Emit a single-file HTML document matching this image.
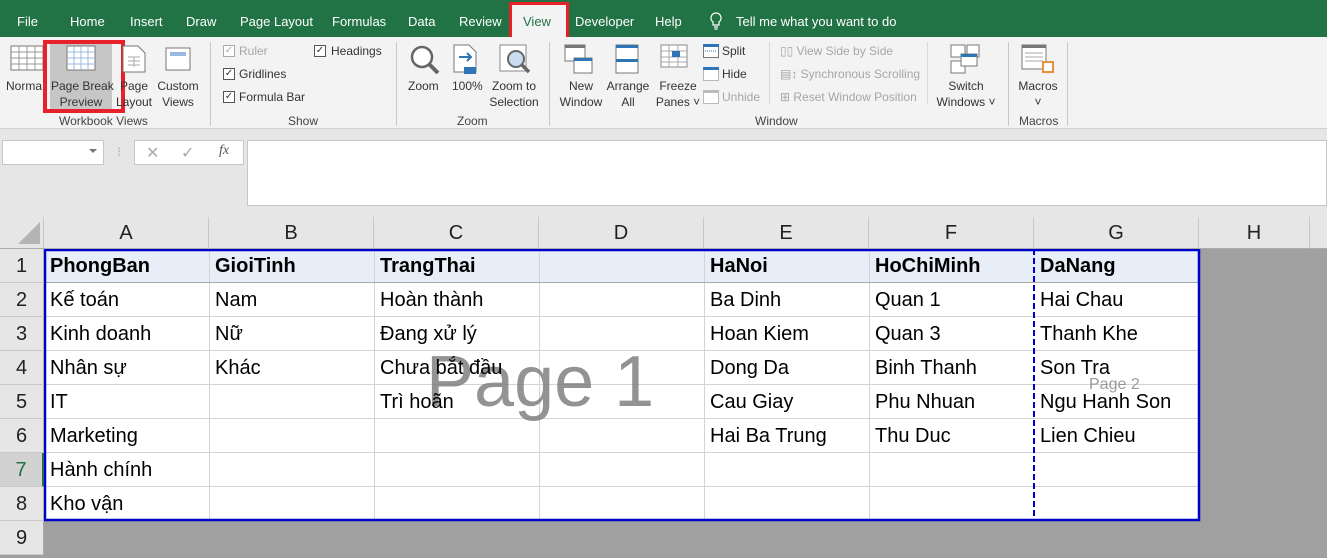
<!DOCTYPE html>
<html><head><meta charset="utf-8"><style>
*{margin:0;padding:0;box-sizing:border-box}
body{width:1327px;height:558px;overflow:hidden;background:#e6e6e6;font-family:"Liberation Sans",sans-serif;position:relative}
.a{position:absolute;white-space:nowrap}
.tab{position:absolute;top:14px;color:#fff;font-size:13px}
.rl{position:absolute;font-size:12px;color:#333;text-align:center;line-height:16px;white-space:nowrap}
.gl{position:absolute;top:114px;font-size:12px;color:#444;white-space:nowrap}
.sep{position:absolute;top:42px;width:1px;height:84px;background:#c8c8c8}
.cb{position:absolute;width:12px;height:12px;border:1px solid #555;background:#fff;font-size:10px;line-height:10px;text-align:center;color:#333}
.dis{color:#a6a6a6}
.ch{position:absolute;top:217px;height:32px;background:#e6e6e6;border-right:1px solid #c8c8c8;border-bottom:1px solid #ababab;font-size:20px;text-align:center;line-height:33px;color:#222}
.rh{position:absolute;left:0;width:44px;height:34px;background:#e6e6e6;border-bottom:1px solid #c8c8c8;border-right:1px solid #ababab;font-size:20px;text-align:center;line-height:34px;color:#222}
.c{position:absolute;font-size:20px;color:#000;line-height:34px;white-space:nowrap}
.b{font-weight:bold}
</style></head><body>
<div class="a" style="left:0;top:0;width:1327px;height:37px;background:#217346"></div>
<div class="tab" style="left:17px">File</div>
<div class="tab" style="left:70px">Home</div>
<div class="tab" style="left:130px">Insert</div>
<div class="tab" style="left:186px">Draw</div>
<div class="tab" style="left:240px">Page Layout</div>
<div class="tab" style="left:332px">Formulas</div>
<div class="tab" style="left:408px">Data</div>
<div class="tab" style="left:459px">Review</div>
<div class="a" style="left:509px;top:2px;width:60px;height:38px;background:#f3f3f3;border:3px solid #e8202a"></div>
<div class="tab" style="left:523px;color:#217346">View</div>
<div class="tab" style="left:575px">Developer</div>
<div class="tab" style="left:655px">Help</div>
<svg class="a" style="left:709px;top:12px" width="14" height="18" viewBox="0 0 14 18"><path d="M7 1a5 5 0 0 0-3 9v3h6v-3a5 5 0 0 0-3-9zM5 15h4M5.5 17h3" fill="none" stroke="#fff" stroke-width="1.2"/></svg>
<div class="tab" style="left:736px">Tell me what you want to do</div>
<div class="a" style="left:0;top:37px;width:1327px;height:92px;background:#f3f3f3;border-bottom:1px solid #d0d0d0"></div>
<svg class="a" style="left:10px;top:45px" width="34" height="26"><rect x="1" y="1" width="32" height="24" fill="#fff" stroke="#777"/><path d="M1 7h32M1 13h32M1 19h32M9 1v24M17 1v24M25 1v24" stroke="#999"/></svg>
<div class="rl" style="left:6px;top:78px">Norma</div>
<div class="a" style="left:50px;top:43px;width:62px;height:66px;background:#c6c6c6"></div>
<div class="a" style="left:43px;top:40px;width:82px;height:73px;border:4px solid #e8202a"></div>
<svg class="a" style="left:66px;top:45px" width="30" height="26"><rect x="1" y="1" width="28" height="24" fill="#fff" stroke="#777"/><path d="M1 7h28M1 13h28M1 19h28M8 1v24M15 1v24M22 1v24" stroke="#9bb8e0"/></svg>
<div class="rl" style="left:51px;top:78px;width:60px">Page Break<br>Preview</div>
<svg class="a" style="left:122px;top:45px" width="24" height="28"><path d="M1 1h15l7 7v19H1z" fill="#fff" stroke="#777"/><path d="M6 12h12M6 16h12M6 20h12M12 12v10" stroke="#aaa"/></svg>
<div class="rl" style="left:115px;top:78px;width:38px">Page<br>Layout</div>
<svg class="a" style="left:163px;top:45px" width="30" height="28"><rect x="3" y="3" width="24" height="22" fill="#fff" stroke="#777"/><rect x="7" y="7" width="16" height="4" fill="#9bb8e0"/></svg>
<div class="rl" style="left:156px;top:78px;width:44px">Custom<br>Views</div>
<div class="gl" style="left:59px">Workbook Views</div>
<div class="sep" style="left:210px"></div>
<div class="cb" style="left:223px;top:45px;border-color:#aaa;color:#aaa">✓</div><div class="rl dis" style="left:239px;top:43px;color:#a6a6a6">Ruler</div>
<div class="cb" style="left:223px;top:68px">✓</div><div class="rl" style="left:239px;top:66px">Gridlines</div>
<div class="cb" style="left:223px;top:91px">✓</div><div class="rl" style="left:239px;top:89px">Formula Bar</div>
<div class="cb" style="left:314px;top:45px">✓</div><div class="rl" style="left:331px;top:43px">Headings</div>
<div class="gl" style="left:288px">Show</div>
<div class="sep" style="left:396px"></div>
<svg class="a" style="left:409px;top:44px" width="32" height="32"><circle cx="13" cy="13" r="10" fill="#fff" stroke="#666" stroke-width="2.5"/><path d="M20 20l9 9" stroke="#666" stroke-width="4"/></svg>
<div class="rl" style="left:408px;top:78px">Zoom</div>
<svg class="a" style="left:453px;top:44px" width="26" height="32"><path d="M1 1h15l7 7v20H1z" fill="#fff" stroke="#777"/><path d="M6 13h12M14 9l4 4-4 4" stroke="#2e75b6" stroke-width="2" fill="none"/><rect x="11" y="23" width="12" height="7" fill="#2e75b6"/></svg>
<div class="rl" style="left:452px;top:78px">100%</div>
<svg class="a" style="left:499px;top:44px" width="34" height="32"><rect x="1" y="1" width="26" height="26" fill="#fff" stroke="#888"/><circle cx="17" cy="15" r="8" fill="#c9dcf0" stroke="#666" stroke-width="2"/><path d="M22 20l8 8" stroke="#666" stroke-width="3.5"/></svg>
<div class="rl" style="left:489px;top:78px;width:50px">Zoom to<br>Selection</div>
<div class="gl" style="left:457px">Zoom</div>
<div class="sep" style="left:549px"></div>
<svg class="a" style="left:564px;top:44px" width="30" height="30"><rect x="1" y="1" width="20" height="16" fill="#fff" stroke="#777"/><rect x="1" y="1" width="20" height="3" fill="#777"/><rect x="10" y="14" width="18" height="15" fill="#fff" stroke="#777"/><rect x="10" y="14" width="18" height="3" fill="#2e75b6"/></svg>
<div class="rl" style="left:559px;top:78px;width:44px">New<br>Window</div>
<svg class="a" style="left:615px;top:44px" width="26" height="30"><rect x="1" y="1" width="22" height="28" fill="#fff" stroke="#777"/><rect x="1" y="1" width="22" height="3" fill="#2e75b6"/><rect x="1" y="15" width="22" height="3" fill="#2e75b6"/></svg>
<div class="rl" style="left:606px;top:78px;width:44px">Arrange<br>All</div>
<svg class="a" style="left:660px;top:44px" width="30" height="30"><rect x="1" y="1" width="26" height="22" fill="#fff" stroke="#888"/><path d="M1 7h26M1 13h26M1 18h26M9 1v22M18 1v22" stroke="#aaa"/><rect x="12" y="7" width="8" height="6" fill="#2e75b6"/></svg>
<div class="rl" style="left:654px;top:78px;width:48px">Freeze<br>Panes ˅</div>
<svg class="a" style="left:703px;top:44px" width="16" height="14"><rect x=".5" y=".5" width="15" height="13" fill="#fff" stroke="#777"/><rect x="0" y="0" width="16" height="3" fill="#2e75b6"/><path d="M2 7h12" stroke="#2e75b6" stroke-dasharray="1 1"/></svg>
<div class="rl" style="left:722px;top:43px">Split</div>
<svg class="a" style="left:703px;top:67px" width="16" height="14"><rect x=".5" y=".5" width="15" height="13" fill="#fff" stroke="#777" stroke-dasharray="1 1"/><rect x="0" y="0" width="16" height="3" fill="#2e75b6"/></svg>
<div class="rl" style="left:722px;top:66px">Hide</div>
<svg class="a" style="left:703px;top:90px" width="16" height="14"><rect x=".5" y=".5" width="15" height="13" fill="#fff" stroke="#bbb"/><rect x="0" y="0" width="16" height="3" fill="#bbb"/></svg>
<div class="rl" style="left:722px;top:89px;color:#a6a6a6">Unhide</div>
<div class="a" style="left:769px;top:42px;width:1px;height:62px;background:#d8d8d8"></div>
<div class="rl" style="left:780px;top:43px;color:#a6a6a6">▯▯ View Side by Side</div>
<div class="rl" style="left:780px;top:66px;color:#a6a6a6">▤↕ Synchronous Scrolling</div>
<div class="rl" style="left:780px;top:89px;color:#a6a6a6">⊞ Reset Window Position</div>
<div class="a" style="left:927px;top:42px;width:1px;height:62px;background:#d8d8d8"></div>
<svg class="a" style="left:950px;top:44px" width="30" height="30"><rect x="1" y="1" width="14" height="12" fill="#fff" stroke="#777"/><rect x="17" y="1" width="12" height="12" fill="#fff" stroke="#777"/><rect x="1" y="17" width="14" height="12" fill="#fff" stroke="#777"/><rect x="11" y="10" width="16" height="12" fill="#fff" stroke="#777"/><rect x="11" y="10" width="16" height="3" fill="#2e75b6"/></svg>
<div class="rl" style="left:936px;top:78px;width:60px">Switch<br>Windows ˅</div>
<div class="gl" style="left:755px">Window</div>
<div class="sep" style="left:1008px"></div>
<svg class="a" style="left:1021px;top:44px" width="36" height="32"><rect x="1" y="1" width="24" height="24" fill="#fff" stroke="#777"/><rect x="1" y="1" width="24" height="3" fill="#777"/><path d="M4 9h18M4 13h18M4 17h18" stroke="#aaa"/><path d="M22 18h10v10h-10z" fill="#fff" stroke="#e8903a" stroke-width="2"/></svg>
<div class="rl" style="left:1016px;top:78px;width:44px">Macros<br>˅</div>
<div class="gl" style="left:1019px">Macros</div>
<div class="sep" style="left:1067px"></div>
<div class="a" style="left:2px;top:140px;width:102px;height:25px;background:#fff;border:1px solid #c6c6c6"></div>
<div class="a" style="left:89px;top:149px;width:0;height:0;border-left:4px solid transparent;border-right:4px solid transparent;border-top:4px solid #777"></div>
<div class="a" style="left:117px;top:144px;color:#aaa;font-size:13px">⁝</div>
<div class="a" style="left:134px;top:140px;width:110px;height:25px;background:#fff;border:1px solid #c6c6c6"></div>
<div class="a" style="left:146px;top:143px;color:#aaa;font-size:16px">✕</div>
<div class="a" style="left:181px;top:143px;color:#aaa;font-size:16px">✓</div>
<div class="a" style="left:219px;top:143px;color:#555;font-size:14px;font-style:italic;font-family:'Liberation Serif',serif">fx</div>
<div class="a" style="left:247px;top:140px;width:1080px;height:66px;background:#fff;border:1px solid #c6c6c6"></div>
<div class="a" style="left:0;top:217px;width:1327px;height:341px;background:#a0a0a0"></div>
<div class="a" style="left:0;top:217px;width:44px;height:32px;background:#e6e6e6;border-right:1px solid #c8c8c8;border-bottom:1px solid #ababab"></div>
<div class="a" style="left:18px;top:222px;width:0;height:0;border-left:22px solid transparent;border-bottom:22px solid #b4b4b4"></div>
<div class="ch" style="left:44px;width:165px">A</div>
<div class="ch" style="left:209px;width:165px">B</div>
<div class="ch" style="left:374px;width:165px">C</div>
<div class="ch" style="left:539px;width:165px">D</div>
<div class="ch" style="left:704px;width:165px">E</div>
<div class="ch" style="left:869px;width:165px">F</div>
<div class="ch" style="left:1034px;width:165px">G</div>
<div class="ch" style="left:1199px;width:111px">H</div>
<div class="ch" style="left:1310px;width:17px;border-right:none"></div>
<div class="rh" style="top:249px">1</div>
<div class="rh" style="top:283px">2</div>
<div class="rh" style="top:317px">3</div>
<div class="rh" style="top:351px">4</div>
<div class="rh" style="top:385px">5</div>
<div class="rh" style="top:419px">6</div>
<div class="rh" style="top:453px;background:#d2d2d2;color:#217346;border-right:2px solid #217346">7</div>
<div class="rh" style="top:487px">8</div>
<div class="rh" style="top:521px">9</div>
<svg class="a" style="left:44px;top:249px" width="1158" height="274">
<rect x="0" y="0" width="1155" height="34" fill="#e8eef7"/>
<rect x="0" y="34" width="1155" height="238" fill="#fff"/>
<g stroke="#d4d4d4" stroke-width="1">
<path d="M165.5 0v272M330.5 0v272M495.5 0v272M660.5 0v272M825.5 0v272"/>
<path d="M0 67.5h1155M0 101.5h1155M0 135.5h1155M0 169.5h1155M0 203.5h1155M0 237.5h1155"/>
</g>
<path d="M0 33.5h1155" stroke="#a8a8a8"/>
<path d="M990 0v272" stroke="#0000cc" stroke-width="2" stroke-dasharray="6 3"/>
<rect x="1" y="1" width="1154" height="270" fill="none" stroke="#0000cc" stroke-width="2.5"/>
</svg>
<div class="a" style="left:426px;top:340px;font-size:72px;color:rgba(120,120,120,.8);line-height:84px">Page 1</div>
<div class="a" style="left:1089px;top:376px;font-size:16px;color:rgba(130,130,130,.8)">Page 2</div>
<div class="c b" style="left:50px;top:249px">PhongBan</div>
<div class="c b" style="left:215px;top:249px">GioiTinh</div>
<div class="c b" style="left:380px;top:249px">TrangThai</div>
<div class="c b" style="left:710px;top:249px">HaNoi</div>
<div class="c b" style="left:875px;top:249px">HoChiMinh</div>
<div class="c b" style="left:1040px;top:249px">DaNang</div>
<div class="c" style="left:50px;top:283px">Kế toán</div>
<div class="c" style="left:50px;top:317px">Kinh doanh</div>
<div class="c" style="left:50px;top:351px">Nhân sự</div>
<div class="c" style="left:50px;top:385px">IT</div>
<div class="c" style="left:50px;top:419px">Marketing</div>
<div class="c" style="left:50px;top:453px">Hành chính</div>
<div class="c" style="left:50px;top:487px">Kho vận</div>
<div class="c" style="left:215px;top:283px">Nam</div>
<div class="c" style="left:215px;top:317px">Nữ</div>
<div class="c" style="left:215px;top:351px">Khác</div>
<div class="c" style="left:380px;top:283px">Hoàn thành</div>
<div class="c" style="left:380px;top:317px">Đang xử lý</div>
<div class="c" style="left:380px;top:351px">Chưa bắt đầu</div>
<div class="c" style="left:380px;top:385px">Trì hoãn</div>
<div class="c" style="left:710px;top:283px">Ba Dinh</div>
<div class="c" style="left:710px;top:317px">Hoan Kiem</div>
<div class="c" style="left:710px;top:351px">Dong Da</div>
<div class="c" style="left:710px;top:385px">Cau Giay</div>
<div class="c" style="left:710px;top:419px">Hai Ba Trung</div>
<div class="c" style="left:875px;top:283px">Quan 1</div>
<div class="c" style="left:875px;top:317px">Quan 3</div>
<div class="c" style="left:875px;top:351px">Binh Thanh</div>
<div class="c" style="left:875px;top:385px">Phu Nhuan</div>
<div class="c" style="left:875px;top:419px">Thu Duc</div>
<div class="c" style="left:1040px;top:283px">Hai Chau</div>
<div class="c" style="left:1040px;top:317px">Thanh Khe</div>
<div class="c" style="left:1040px;top:351px">Son Tra</div>
<div class="c" style="left:1040px;top:385px">Ngu Hanh Son</div>
<div class="c" style="left:1040px;top:419px">Lien Chieu</div>
</body></html>
